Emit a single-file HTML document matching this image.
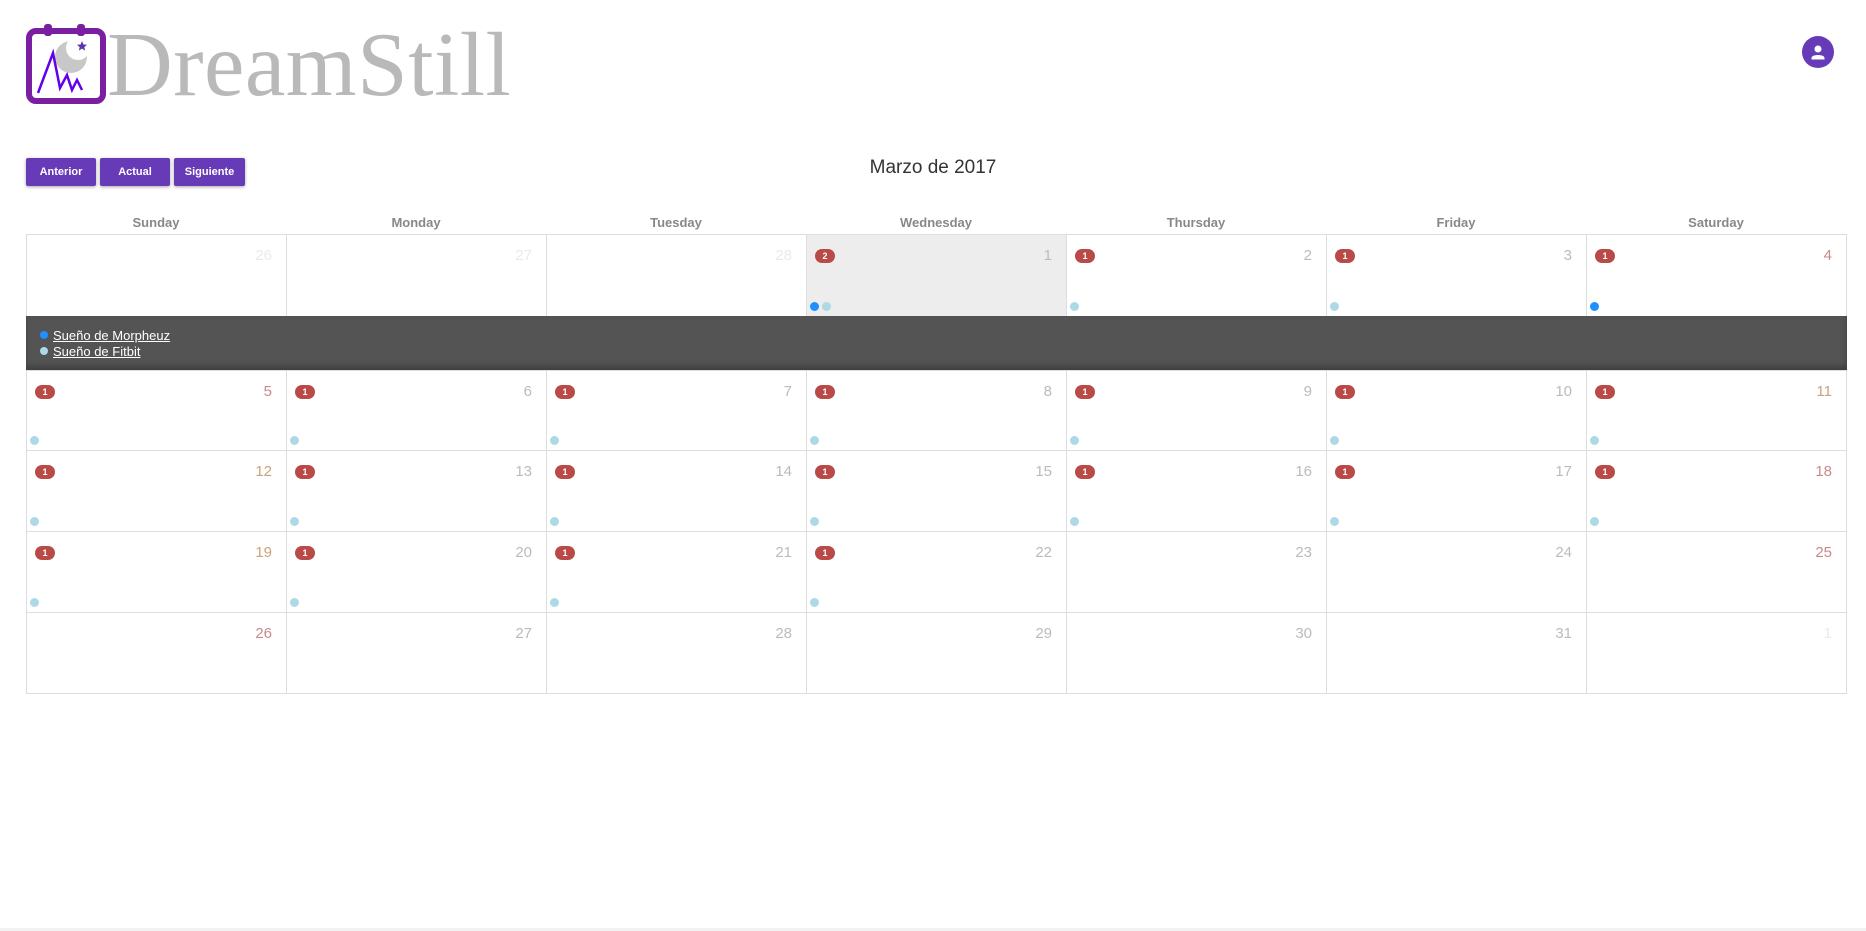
<!DOCTYPE html>
<html><head><meta charset="utf-8"><style>
*{box-sizing:border-box;margin:0;padding:0}
body{width:1866px;height:931px;background:#fff;font-family:"Liberation Sans",sans-serif;position:relative;overflow:hidden}
.logo{position:absolute;left:26px;top:24px}
.brand{position:absolute;left:107px;top:19px;font-family:"Liberation Serif",serif;font-size:91px;color:#b9b9b9;line-height:1;letter-spacing:0.5px}
.avatar{position:absolute;left:1802px;top:36px;width:32px;height:32px;border-radius:50%;background:#673ab7}
.btn{position:absolute;top:158px;height:28px;background:#673ab7;color:#fff;font-size:11px;font-weight:bold;text-align:center;line-height:28px;border-radius:2px;box-shadow:0 1px 3px rgba(0,0,0,.35)}
.title{position:absolute;left:0;width:1866px;top:157px;text-align:center;font-size:19px;color:#333}
.hdr{position:absolute;top:215px;width:260px;text-align:center;font-size:13px;font-weight:bold;color:#888}
.cell{position:absolute;width:261px;border:1px solid #ddd;background:#fff}
.num{position:absolute;right:14px;top:12px;font-size:15px;color:#bbb}
.we{color:#c88a8a}.tan{color:#c9a37a}.om{color:#eaeaea}
.bd{position:absolute;left:8px;top:14px;width:20px;height:14px;border-radius:7px;background:#b94a48;color:#fff;font-size:9px;font-weight:bold;text-align:center;line-height:14px}
.dot{position:absolute;bottom:5px;width:9px;height:9px;border-radius:50%;background:#add8e6}
.dot.b{background:#1e90ff}
.panel{position:absolute;left:26px;top:316px;width:1821px;height:54px;background:#545454;box-shadow:inset 0 -4px 6px rgba(0,0,0,.25)}
.ev{position:absolute;left:14px;font-size:13px;color:#fff;text-decoration:underline}
.ev i{display:inline-block;width:8px;height:8px;border-radius:50%;margin-right:5px;vertical-align:1px}
</style></head><body>
<svg class="logo" width="80" height="80" viewBox="0 0 80 80">
<defs><mask id="m"><rect width="80" height="80" fill="#fff"/><circle cx="52" cy="24" r="12" fill="#000"/></mask></defs>
<rect x="3" y="7" width="74" height="70" rx="7" fill="none" stroke="#7b1fa2" stroke-width="6"/>
<rect x="18" y="0" width="8" height="12" rx="3" fill="#7b1fa2"/>
<rect x="51" y="0" width="8" height="12" rx="3" fill="#7b1fa2"/>
<circle cx="45" cy="33" r="16" fill="#c8c8c8" mask="url(#m)"/>
<path d="M56 17 l1.5 3.5 3.5 .3 -2.7 2.3 .9 3.5 -3.2 -2 -3.2 2 .9 -3.5 -2.7 -2.3 3.5 -.3z" fill="#5e35b1"/>
<path d="M12 69 L27 29 L34 64 L41 51 L46 66 L51 56 L56 66" fill="none" stroke="#6200ea" stroke-width="2.5"/>
</svg>
<div class="brand">DreamStill</div>
<div class="avatar"><svg width="32" height="32" viewBox="0 0 32 32"><circle cx="16" cy="13" r="3.5" fill="#fff"/><path d="M9.5 22 c0-4 13-4 13 0 v1.5 h-13z" fill="#fff"/></svg></div>
<div class="btn" style="left:26px;width:70px">Anterior</div>
<div class="btn" style="left:100px;width:70px">Actual</div>
<div class="btn" style="left:174px;width:71px">Siguiente</div>
<div class="title">Marzo de 2017</div>
<div class="hdr" style="left:26px">Sunday</div>
<div class="hdr" style="left:286px">Monday</div>
<div class="hdr" style="left:546px">Tuesday</div>
<div class="hdr" style="left:806px">Wednesday</div>
<div class="hdr" style="left:1066px">Thursday</div>
<div class="hdr" style="left:1326px">Friday</div>
<div class="hdr" style="left:1586px">Saturday</div>

<div class="cell" style="left:26px;top:234px;height:83px"><span class="num om">26</span></div>
<div class="cell" style="left:286px;top:234px;height:83px"><span class="num om">27</span></div>
<div class="cell" style="left:546px;top:234px;height:83px"><span class="num om">28</span></div>
<div class="cell" style="left:806px;top:234px;height:83px;background:#ededed"><span class="bd">2</span><span class="num">1</span><span class="dot b" style="left:3px"></span><span class="dot" style="left:15px"></span></div>
<div class="cell" style="left:1066px;top:234px;height:83px"><span class="bd">1</span><span class="num">2</span><span class="dot" style="left:3px"></span></div>
<div class="cell" style="left:1326px;top:234px;height:83px"><span class="bd">1</span><span class="num">3</span><span class="dot" style="left:3px"></span></div>
<div class="cell" style="left:1586px;top:234px;height:83px"><span class="bd">1</span><span class="num we">4</span><span class="dot b" style="left:3px"></span></div>

<div class="panel">
<div class="ev" style="top:12px"><i style="background:#1e90ff"></i>Sueño de Morpheuz</div>
<div class="ev" style="top:28px"><i style="background:#add8e6"></i>Sueño de Fitbit</div>
</div>

<div class="cell" style="left:26px;top:370px;height:81px"><span class="bd">1</span><span class="num we">5</span><span class="dot" style="left:3px"></span></div>
<div class="cell" style="left:286px;top:370px;height:81px"><span class="bd">1</span><span class="num">6</span><span class="dot" style="left:3px"></span></div>
<div class="cell" style="left:546px;top:370px;height:81px"><span class="bd">1</span><span class="num">7</span><span class="dot" style="left:3px"></span></div>
<div class="cell" style="left:806px;top:370px;height:81px"><span class="bd">1</span><span class="num">8</span><span class="dot" style="left:3px"></span></div>
<div class="cell" style="left:1066px;top:370px;height:81px"><span class="bd">1</span><span class="num">9</span><span class="dot" style="left:3px"></span></div>
<div class="cell" style="left:1326px;top:370px;height:81px"><span class="bd">1</span><span class="num">10</span><span class="dot" style="left:3px"></span></div>
<div class="cell" style="left:1586px;top:370px;height:81px"><span class="bd">1</span><span class="num tan">11</span><span class="dot" style="left:3px"></span></div>
<div class="cell" style="left:26px;top:450px;height:82px"><span class="bd">1</span><span class="num tan">12</span><span class="dot" style="left:3px"></span></div>
<div class="cell" style="left:286px;top:450px;height:82px"><span class="bd">1</span><span class="num">13</span><span class="dot" style="left:3px"></span></div>
<div class="cell" style="left:546px;top:450px;height:82px"><span class="bd">1</span><span class="num">14</span><span class="dot" style="left:3px"></span></div>
<div class="cell" style="left:806px;top:450px;height:82px"><span class="bd">1</span><span class="num">15</span><span class="dot" style="left:3px"></span></div>
<div class="cell" style="left:1066px;top:450px;height:82px"><span class="bd">1</span><span class="num">16</span><span class="dot" style="left:3px"></span></div>
<div class="cell" style="left:1326px;top:450px;height:82px"><span class="bd">1</span><span class="num">17</span><span class="dot" style="left:3px"></span></div>
<div class="cell" style="left:1586px;top:450px;height:82px"><span class="bd">1</span><span class="num we">18</span><span class="dot" style="left:3px"></span></div>
<div class="cell" style="left:26px;top:531px;height:82px"><span class="bd">1</span><span class="num tan">19</span><span class="dot" style="left:3px"></span></div>
<div class="cell" style="left:286px;top:531px;height:82px"><span class="bd">1</span><span class="num">20</span><span class="dot" style="left:3px"></span></div>
<div class="cell" style="left:546px;top:531px;height:82px"><span class="bd">1</span><span class="num">21</span><span class="dot" style="left:3px"></span></div>
<div class="cell" style="left:806px;top:531px;height:82px"><span class="bd">1</span><span class="num">22</span><span class="dot" style="left:3px"></span></div>
<div class="cell" style="left:1066px;top:531px;height:82px"><span class="num">23</span></div>
<div class="cell" style="left:1326px;top:531px;height:82px"><span class="num">24</span></div>
<div class="cell" style="left:1586px;top:531px;height:82px"><span class="num we">25</span></div>
<div class="cell" style="left:26px;top:612px;height:82px"><span class="num we">26</span></div>
<div class="cell" style="left:286px;top:612px;height:82px"><span class="num">27</span></div>
<div class="cell" style="left:546px;top:612px;height:82px"><span class="num">28</span></div>
<div class="cell" style="left:806px;top:612px;height:82px"><span class="num">29</span></div>
<div class="cell" style="left:1066px;top:612px;height:82px"><span class="num">30</span></div>
<div class="cell" style="left:1326px;top:612px;height:82px"><span class="num">31</span></div>
<div class="cell" style="left:1586px;top:612px;height:82px"><span class="num om">1</span></div>
<div style="position:absolute;left:0;top:928px;width:1866px;height:3px;background:#f2f2f2"></div>
</body></html>
